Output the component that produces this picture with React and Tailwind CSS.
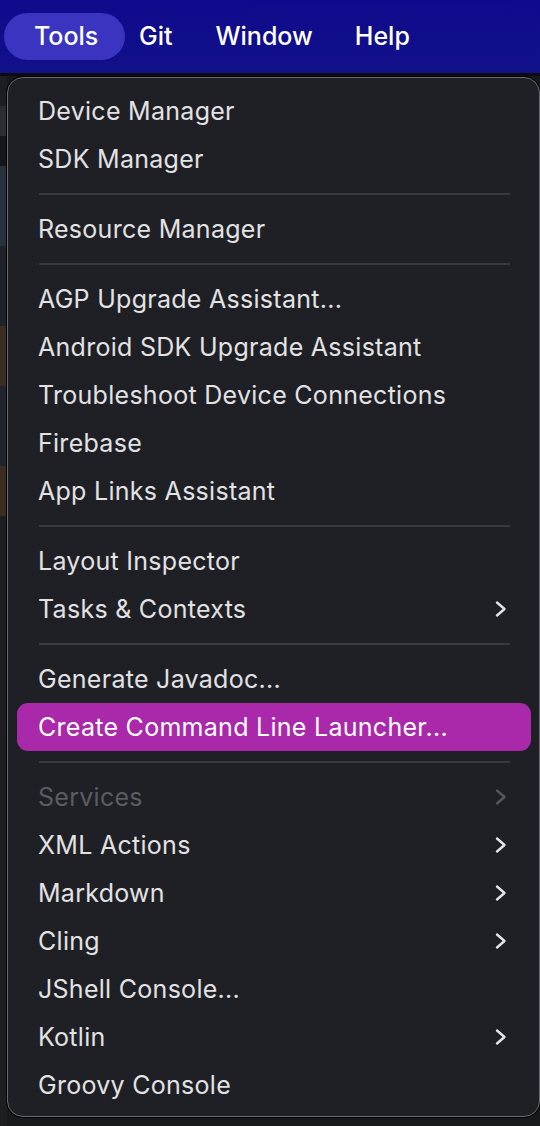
import { Fragment } from "react"

const menu = [
  [{ label: "Device Manager" }, { label: "SDK Manager" }],
  [{ label: "Resource Manager" }],
  [
    { label: "AGP Upgrade Assistant..." },
    { label: "Android SDK Upgrade Assistant" },
    { label: "Troubleshoot Device Connections" },
    { label: "Firebase" },
    { label: "App Links Assistant" },
  ],
  [{ label: "Layout Inspector" }, { label: "Tasks & Contexts", sub: true }],
  [{ label: "Generate Javadoc..." }, { label: "Create Command Line Launcher...", active: true }],
  [
    { label: "Services", sub: true, disabled: true },
    { label: "XML Actions", sub: true },
    { label: "Markdown", sub: true },
    { label: "Cling", sub: true },
    { label: "JShell Console..." },
    { label: "Kotlin", sub: true },
    { label: "Groovy Console" },
  ],
]

function Chevron({ dim }) {
  return (
    <svg width="14" height="18" viewBox="0 0 14 18" className={dim ? "text-[#55565c]" : "text-[#e4e4e6]"}>
      <polyline points="3,2.5 10.5,9 3,15.5" fill="none" stroke="currentColor" strokeWidth="2.4" strokeLinecap="round" strokeLinejoin="round" />
    </svg>
  )
}

function Item({ item }) {
  return (
    <div className="h-[48px] pl-[9px] pr-[8px] flex items-center">
      <div
        className={`flex-1 h-full flex items-center pl-[21px] pr-[23px] rounded-[11px] ${
          item.active ? "bg-[#aa28aa] text-white" : item.disabled ? "text-[#5b5c61]" : "text-[#e2e2e4]"
        }`}
      >
        <span className="flex-1 text-[25px] tracking-[0.28px] leading-none">{item.label}</span>
        {item.sub && <Chevron dim={item.disabled} />}
      </div>
    </div>
  )
}

export default function App() {
  return (
    <div className="w-[540px] h-[1126px] overflow-hidden bg-[#17191d] font-['Inter',sans-serif] flex flex-col">
      {/* menu bar */}
      <div className="h-[73px] shrink-0 bg-gradient-to-b from-[#0f0a8c] to-[#12108a] flex items-center pl-[4px] text-white text-[25px] font-medium">
        <div className="h-[47px] w-[121px] rounded-full bg-[#3a34c0] flex items-center pl-[30px]">Tools</div>
        <span className="ml-[14px]">Git</span>
        <span className="ml-[43px]">Window</span>
        <span className="ml-[42px]">Help</span>
      </div>
      <div className="h-[3px] shrink-0 bg-[#0b0b10]" />

      <div className="flex-1 flex min-h-0">
        {/* app behind */}
        <div className="w-[7px] shrink-0 flex flex-col">
          <div className="h-[30px] bg-[#1c1e22]" />
          <div className="h-[30px] bg-[#2b2d33]" />
          <div className="h-[30px] bg-[#15171a]" />
          <div className="h-[80px] bg-[#27303d]" />
          <div className="h-[80px] bg-[#1e2127]" />
          <div className="h-[60px] bg-[#3a2e22]" />
          <div className="h-[80px] bg-[#20232a]" />
          <div className="h-[50px] bg-[#3a2d1f]" />
          <div className="flex-1 bg-[#1c1e22]" />
        </div>

        {/* dropdown */}
        <div className="w-[533px] shrink-0 h-[1040px] mt-[1px] rounded-[16px] border border-[#6a6a72] bg-[#1f2025] pt-[9px] pb-[7px] flex flex-col shadow-[0_0_0_1px_#000]">
          {menu.map((group, gi) => (
            <Fragment key={gi}>
              {gi > 0 && (
                <div className="h-[22px] flex items-center pl-[31px] pr-[29px]">
                  <div className="h-[2px] flex-1 bg-[#393a40]" />
                </div>
              )}
              {group.map((item) => (
                <Item key={item.label} item={item} />
              ))}
            </Fragment>
          ))}
        </div>
      </div>
    </div>
  )
}
